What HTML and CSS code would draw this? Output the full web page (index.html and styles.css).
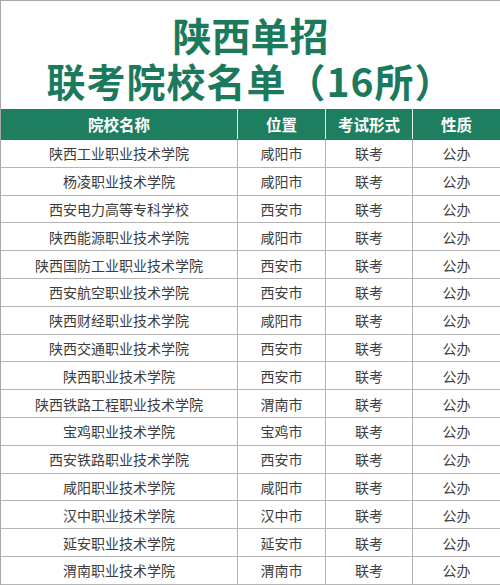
FILE: index.html
```html
<!DOCTYPE html>
<html lang="zh">
<head>
<meta charset="utf-8">
<link rel="stylesheet" href="styles.css">
</head>
<body>
<div class="page">
  <header class="title">
    <div class="line1">陕西单招</div>
    <div class="line2">联考院校名单（16所）</div>
  </header>
  <div class="table">
    <div class="row head"><div>院校名称</div><div>位置</div><div>考试形式</div><div>性质</div></div>
    <div class="row"><div>陕西工业职业技术学院</div><div>咸阳市</div><div>联考</div><div>公办</div></div>
    <div class="row"><div>杨凌职业技术学院</div><div>咸阳市</div><div>联考</div><div>公办</div></div>
    <div class="row"><div>西安电力高等专科学校</div><div>西安市</div><div>联考</div><div>公办</div></div>
    <div class="row"><div>陕西能源职业技术学院</div><div>咸阳市</div><div>联考</div><div>公办</div></div>
    <div class="row"><div>陕西国防工业职业技术学院</div><div>西安市</div><div>联考</div><div>公办</div></div>
    <div class="row"><div>西安航空职业技术学院</div><div>西安市</div><div>联考</div><div>公办</div></div>
    <div class="row"><div>陕西财经职业技术学院</div><div>咸阳市</div><div>联考</div><div>公办</div></div>
    <div class="row"><div>陕西交通职业技术学院</div><div>西安市</div><div>联考</div><div>公办</div></div>
    <div class="row"><div>陕西职业技术学院</div><div>西安市</div><div>联考</div><div>公办</div></div>
    <div class="row"><div>陕西铁路工程职业技术学院</div><div>渭南市</div><div>联考</div><div>公办</div></div>
    <div class="row"><div>宝鸡职业技术学院</div><div>宝鸡市</div><div>联考</div><div>公办</div></div>
    <div class="row"><div>西安铁路职业技术学院</div><div>西安市</div><div>联考</div><div>公办</div></div>
    <div class="row"><div>咸阳职业技术学院</div><div>咸阳市</div><div>联考</div><div>公办</div></div>
    <div class="row"><div>汉中职业技术学院</div><div>汉中市</div><div>联考</div><div>公办</div></div>
    <div class="row"><div>延安职业技术学院</div><div>延安市</div><div>联考</div><div>公办</div></div>
    <div class="row"><div>渭南职业技术学院</div><div>渭南市</div><div>联考</div><div>公办</div></div>
  </div>
</div>
</body>
</html>
```
FILE: styles.css
```css
html, body {
  margin: 0;
  padding: 0;
  background: #fff;
}
.page {
  width: 500px;
  height: 585px;
  overflow: hidden;
  box-sizing: border-box;
  border-left: 1px solid #a8a8a8;
  border-top: 1px solid #a8a8a8;
  font-family: "Noto Sans CJK SC", "Noto Sans", sans-serif;
}
.title {
  height: 108px;
  color: #1b7a5c;
  font-weight: 700;
  font-size: 39px;
  text-align: center;
  box-sizing: border-box;
  padding-top: 11px;
}
.line1 {
  line-height: 44px;
}
.line2 {
  line-height: 44px;
  margin-top: 2px;
  letter-spacing: 1px;
}
.table {
  display: flex;
  flex-direction: column;
}
.row {
  display: grid;
  grid-template-columns: 237px 88px 87px 87px;
  height: 27.8px;
  border-bottom: 1px solid #b4b4b4;
  box-sizing: border-box;
  color: #3c3c3c;
  font-size: 14px;
}
.row > div {
  display: flex;
  align-items: center;
  justify-content: center;
  border-right: 1px solid #b4b4b4;
}
.row > div:last-child {
  border-right: none;
}
.row.head {
  height: 31px;
  background: #1d7e60;
  color: #fff;
  font-weight: 700;
  font-size: 15.5px;
  border-bottom: 1px solid #1d7e60;
}
.row.head > div {
  border-right: 1px solid #e8f0ec;
}
.row.head > div:last-child {
  border-right: none;
}
```
